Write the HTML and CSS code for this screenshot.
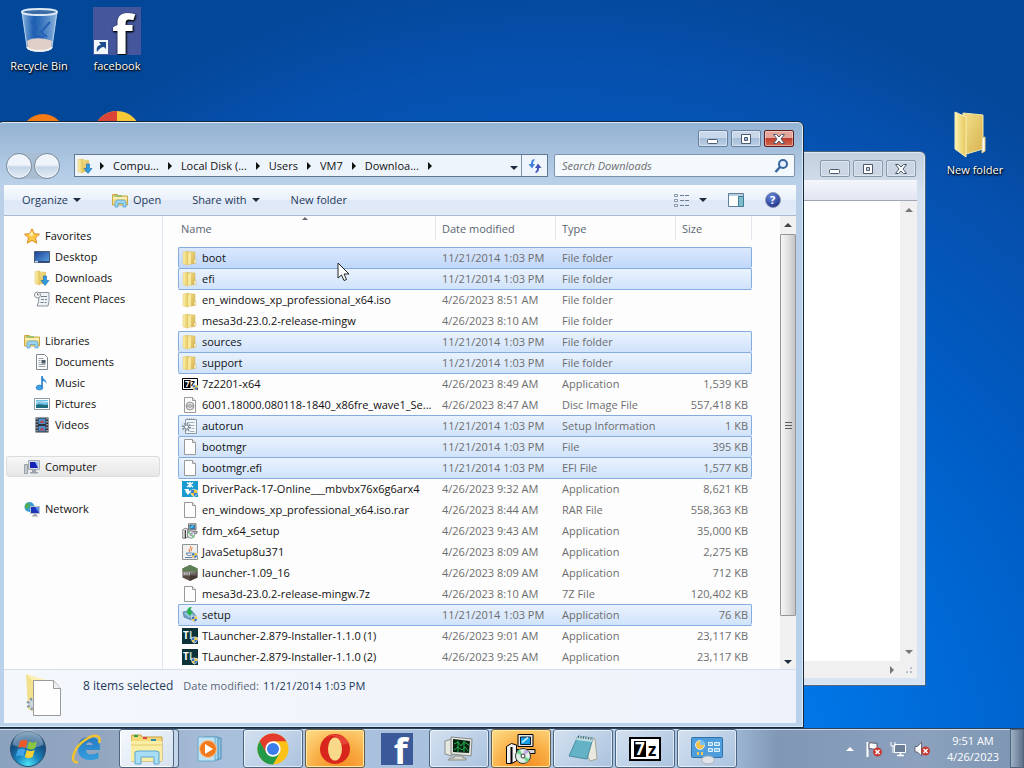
FILE: index.html
```html
<!DOCTYPE html>
<html lang="en">
<head>
    <meta charset="UTF-8">
    <meta name="viewport" content="width=device-width, initial-scale=1.0">
    <title>Downloads</title>
    <link rel="stylesheet" href="styles.css">
</head>
<body>
    <!-- shared icons -->
    <svg class="sprite" aria-hidden="true">
        <defs>
            <linearGradient id="gFolder" x1="0" x2="1"><stop offset="0" stop-color="#fdf3b0"/><stop offset="1" stop-color="#e6c65c"/></linearGradient>
            <linearGradient id="gFolderBack" x1="0" x2="1" y2="1"><stop offset="0" stop-color="#f3e08c"/><stop offset="1" stop-color="#d6b24e"/></linearGradient>
            <linearGradient id="gBlue" x1="0" y1="0" x2="1" y2="1"><stop offset="0" stop-color="#1a3f96"/><stop offset="1" stop-color="#5fa6e4"/></linearGradient>
            <linearGradient id="gGlass" x1="0" x2="1"><stop offset="0" stop-color="#bfdcf7" stop-opacity=".75"/><stop offset=".35" stop-color="#4f8fdc" stop-opacity=".35"/><stop offset="1" stop-color="#cfe6fb" stop-opacity=".7"/></linearGradient>
            <radialGradient id="gOrb" cx=".5" cy=".95" r=".95"><stop offset="0" stop-color="#4fe6f5"/><stop offset=".35" stop-color="#1a86c0"/><stop offset=".7" stop-color="#134d80"/><stop offset="1" stop-color="#5d86ad"/></radialGradient>
            <radialGradient id="gHelp" cx=".4" cy=".3" r=".8"><stop offset="0" stop-color="#6b8be0"/><stop offset="1" stop-color="#14267e"/></radialGradient>
            <linearGradient id="gIe" x1="0" y1="0" x2="0" y2="1"><stop offset="0" stop-color="#1559a8"/><stop offset="1" stop-color="#3fb0ee"/></linearGradient>
        </defs>
        <symbol id="folder" viewBox="0 0 16 16">
            <path d="M5 1.500L13 2v11.500l-8 1z" fill="url(#gFolderBack)" stroke="#d3b45a" stroke-width=".5"/>
            <path d="M1 2l5-.8V15.200l-5-1.500z" fill="url(#gFolder)" stroke="#dcc36c" stroke-width=".5"/>
            <path d="M6 3.500l3-1.500v11.500L6 15z" fill="#f6e99e"/>
            <path d="M12 9.500h2v3.500l-2 .5z" fill="#fff6cf" stroke="#c4a658" stroke-width=".4"/>
        </symbol>
        <symbol id="page" viewBox="0 0 16 16">
            <path d="M2.500.5h8l3 3v12h-11z" fill="#fdfdfd" stroke="#9a9a9a"/>
            <path d="M10.500.5v3h3" fill="#e8e8e8" stroke="#9a9a9a"/>
        </symbol>
        <symbol id="shield" viewBox="0 0 8 8">
            <path d="M4 0L0 1.200c0 3.500 1 5.600 4 6.800 3-1.200 4-3.300 4-6.800z" fill="#d8dde4"/>
            <path d="M4 .8L1 1.600V4h3z" fill="#3c74c8"/><path d="M4 .8l3 .8V4H4z" fill="#eccb3e"/>
            <path d="M1 4h3v3.200C2.300 6.500 1.300 5.500 1 4z" fill="#eccb3e"/><path d="M7 4H4v3.200C5.700 6.500 6.700 5.500 7 4z" fill="#3c74c8"/>
        </symbol>
        <symbol id="disc" viewBox="0 0 16 16">
            <use href="#page"/>
            <circle cx="8" cy="9" r="4" fill="#dcdcdc" stroke="#9a9a9a"/><circle cx="8" cy="9" r="1.300" fill="#fff" stroke="#8d8d8d"/>
            <path d="M5 7.500v3M11 7.500v3" stroke="#888"/>
        </symbol>
        <symbol id="inf" viewBox="0 0 16 16">
            <path d="M3.500 1.500h11v14h-11z" fill="#f4f8fb" stroke="#8a9aa8"/>
            <path d="M5.500 4.500h7M8.500 7.500h4M9.500 10.500h3M7.500 13.500h5" stroke="#9fb0bf"/>
            <path d="M5 1h8" stroke="#71808d" stroke-dasharray="1 1"/>
            <circle cx="4.500" cy="9" r="3.500" fill="#dfe6ec" stroke="#7a8996" stroke-width="2" stroke-dasharray="1.500 1.200"/>
            <circle cx="4.500" cy="9" r="2" fill="#fff" stroke="#6d7c8a"/>
        </symbol>
        <symbol id="driverpack" viewBox="0 0 16 16">
            <path d="M0 0h16v16H0z" fill="#199bd0"/>
            <path d="M5 1.500l6 4.500M11 1.500L5 6M8 1v5.500" stroke="#fff" stroke-width="1.500"/>
            <path d="M2 8h5v2h2l-3 4-3-4h1z" fill="#fff"/>
            <use href="#shield" x="8" y="8" width="8" height="8"/>
        </symbol>
        <symbol id="installer" viewBox="0 0 32 32">
            <path d="M13 1.500h15v12H13z" fill="#e6e6e6" stroke="#000"/>
            <path d="M15.500 4h10v7.500h-10z" fill="#159fe8" stroke="#123"/>
            <path d="M17 9.500l6-5" stroke="#aee4ff" stroke-width="2"/>
            <path d="M12 16.500h18v4H12z" fill="#d7d7d7" stroke="#000"/>
            <path d="M1.500 13.500l5-3 5 1.500v16l-5 2.500H1.500z" fill="#f3f3f3" stroke="#000"/>
            <path d="M6.500 14v16" stroke="#000" stroke-width="2"/>
            <circle cx="18" cy="23" r="7.500" fill="#dff1e6" stroke="#333"/>
            <path d="M18 23l-6.500-3 3-4zM18 23l6.500 3-3 4z" fill="#6fd28e"/><path d="M18 23l2-7 4 3z" fill="#c7a7e6"/>
            <circle cx="18" cy="23" r="2" fill="#fff" stroke="#333"/>
        </symbol>
        <symbol id="java" viewBox="0 0 16 16">
            <path d="M.5.500h15v15H.5z" fill="#f0f0ee" stroke="#8d949a"/>
            <path d="M8 2c3 2-3 3 0 6M10 3.500c1 1-2 2-.5 3.500" fill="none" stroke="#e0732c"/>
            <path d="M4.500 9h6c0 2-1 2.500-3 2.500S4.500 11 4.500 9zM3 13.500h9" fill="none" stroke="#5a7ea6"/>
            <use href="#shield" x="9" y="8" width="7" height="7"/>
        </symbol>
        <symbol id="block" viewBox="0 0 16 16">
            <path d="M8 0l7.500 3.500v9L8 16 .5 12.500v-9z" fill="#574a42"/>
            <path d="M8 0l7.500 3.500v3L8 8 .5 6.500v-3z" fill="#5e7f55"/>
            <path d="M1 6.500h14v4H1z" fill="#8d8785"/><path d="M2.500 7.500v2M5 7.500v2M7.500 7.500v2M10 7.500v2M12.500 7.500v2" stroke="#d0cccb"/>
            <path d="M8 8v8l7.500-3.500v-6z" fill="#2d2421" opacity=".45"/>
        </symbol>
        <symbol id="setup" viewBox="0 0 16 16">
            <path d="M1 5l8-2 6 7-6 3-7-3z" fill="#6f9fc4" stroke="#456e90" stroke-width=".6"/>
            <path d="M2 6l6-1.500 4 4-5 2z" fill="#9cc5df"/>
            <path d="M8 0c-2 1-3.500 3-2.500 5H4l4 4 3-4.500H9C8 3 8.500 1.500 10 .5z" fill="#25b04c"/>
            <use href="#shield" x="9" y="8" width="7" height="8"/>
        </symbol>
        <symbol id="star" viewBox="0 0 16 16">
            <path d="M8 .8l2.200 4.900 5.300.5-4 3.600 1.200 5.300L8 12.400l-4.700 2.700 1.200-5.300-4-3.600 5.300-.5z" fill="#fbc94b" stroke="#dc8a1e"/>
            <path d="M8 3l1.300 3.500L8 8 5 7z" fill="#fff0b8"/>
        </symbol>
        <symbol id="desktop" viewBox="0 0 16 16">
            <path d="M.5 2.500h15v11H.5z" fill="url(#gBlue)" stroke="#4a5a70"/>
            <path d="M1 12h14v1.500H1z" fill="#2e4a7c"/><path d="M1 12h3v1.500H1z" fill="#cfe2f5"/>
        </symbol>
        <symbol id="downloads" viewBox="0 0 16 16">
            <path d="M6 1.500L12 2v12H6z" fill="url(#gFolderBack)"/>
            <path d="M1 1.500l5-.5v14l-5-1.500z" fill="url(#gFolder)" stroke="#d8bd63" stroke-width=".5"/>
            <path d="M9.500 6h3v4.500H15l-4 5-4-5h2.500z" fill="#2f9be0" stroke="#1769ac" stroke-width=".6"/>
        </symbol>
        <symbol id="recent" viewBox="0 0 16 16">
            <path d="M5 1.500h10v9l-1 4.500H3l1.500-4z" fill="#eef2f5" stroke="#8994a0"/>
            <path d="M7 5.500h6M7 8.500h3m1 0h2M6.500 11.500h3m1 0h2" stroke="#77838f"/>
            <circle cx="3.500" cy="4" r="3" fill="#f8f8f8" stroke="#8994a0"/><path d="M3.500 2v2H5" fill="none" stroke="#555" stroke-width=".7"/>
        </symbol>
        <symbol id="library" viewBox="0 0 16 16">
            <path d="M.5 2.500h5l1 1.500h9v9H.5z" fill="#f3dc84" stroke="#caa848"/>
            <path d="M2 4h8" stroke="#5bb05b"/><path d="M1 6h14" stroke="#fff5c4" stroke-width="1.500"/>
            <path d="M3 15V9.500L5 8h7l2 1.500V15h-3v-3.500H6V15z" fill="#9bd3f0" stroke="#4a9cc8" stroke-width=".7"/>
        </symbol>
        <symbol id="documents" viewBox="0 0 16 16">
            <path d="M2.500.5h8l3 3v12h-11z" fill="#fcfcfc" stroke="#7f8790"/>
            <path d="M4.500 4.500h5M4.500 6.500h2M4.500 8.500h2M4.500 10.500h7M4.500 12.500h7" stroke="#98a3ae"/><path d="M7.500 6h4v3.500h-4z" fill="#4b5967"/>
        </symbol>
        <symbol id="music" viewBox="0 0 16 16">
            <path d="M8 1c1 3.500 5 3.500 4.500 8-.5-2-2-3-4-3v6.500z" fill="#2f8fdc"/><ellipse cx="5.500" cy="12.500" rx="3.500" ry="2.500" fill="#3b9fe6" stroke="#1c6cb4" stroke-width=".5"/><path d="M8 1v11" stroke="#1f78c4" stroke-width="1.500"/>
        </symbol>
        <symbol id="pictures" viewBox="0 0 16 16">
            <path d="M.5 2.500h15v11H.5z" fill="#fff" stroke="#8c9aa6"/>
            <path d="M2 4h12v8H2z" fill="#6fc3e8"/><path d="M2 9c4-2 8 1 12-.5V12H2z" fill="#1f6a7c"/><path d="M2 6.500c4-1.500 7 0 12-1" stroke="#e4f6fd"/>
        </symbol>
        <symbol id="videos" viewBox="0 0 16 16">
            <path d="M1.500.5h13v15h-13z" fill="#2b323b"/>
            <path d="M4.500 1.500h7v5.500h-7zM4.500 9h7v5.500h-7z" fill="#4d8fd0"/><path d="M5 6l3-3 3 3zM5 13.500l3-3 3 3z" fill="#b84a4a"/>
            <path d="M3 1v14M13 1v14" stroke="#e8eef4" stroke-dasharray="1.500 1.500"/>
        </symbol>
        <symbol id="computer" viewBox="0 0 16 16">
            <path d="M.5 5.500h3v9h-3z" fill="#c6ccd2" stroke="#7c868f" stroke-width=".7"/>
            <path d="M4.500 1.500h11v9h-11z" fill="#d9dee4" stroke="#a2abb4"/><path d="M6 3h8v6H6z" fill="#1622b4"/><path d="M11 3h3v6z" fill="#93b6f2"/>
            <path d="M8 11h4v2h2v1.500H6V13h2z" fill="#9aa3ac"/>
        </symbol>
        <symbol id="network" viewBox="0 0 16 16">
            <circle cx="5.500" cy="6" r="5" fill="#3a9ed2"/><path d="M3 2c3 0 4 2 2 4s-2 2-4 1c-.5-2 .5-4 2-5z" fill="#4fae55"/>
            <path d="M6.500 5.500h9v7h-9z" fill="#1c33bc" stroke="#b9c2cc"/><path d="M11 6h4v6z" fill="#5f8cec"/><path d="M9.500 13h3v1.500h1.500v1H8v-1h1.500z" fill="#98a2ac"/>
        </symbol>
    </svg>

    <main class="desktop">
        <a href="#" class="shortcut recycle">
            <svg viewBox="0 0 48 48" width="48" height="48">
                <path d="M7 5h35l-5 35c-1 6-24 6-25 0z" fill="url(#gGlass)" stroke="#b5d3ee"/>
                <path d="M12 34c6-4 17-3 25 0l-1 7c-2 5-22 5-23 0z" fill="#e0cfc9"/>
                <path d="M16 14l6 7-5 6M35 15l-9 10 6 5M20 29l9 1" fill="none" stroke="#265fb6" stroke-width="2"/>
                <ellipse cx="24.500" cy="5" rx="17.500" ry="3" fill="#3c6da6" stroke="#dbe9f5" stroke-width="2"/>
                <path d="M12 40c2 5 23 5 25 0" fill="none" stroke="#f2f2f2" stroke-width="2"/>
            </svg>
            <span>Recycle Bin</span>
        </a>
        <a href="#" class="shortcut facebook">
            <svg viewBox="0 0 48 48" width="48" height="48">
                <path d="M0 0h48v48H0z" fill="#45569c"/>
                <text x="19" y="47" font-size="54" font-weight="700" fill="#fff">f</text>
                <path d="M1 33h14v14H1z" fill="#f2f7fc"/><path d="M4 45c-1-5 1-7 4-7l-2-3h7v7l-2-2c-3 0-5 2-7 5z" fill="#1c4b8e"/>
            </svg>
            <span>facebook</span>
        </a>
        <a href="#" class="shortcut firefox" aria-label="Firefox"><svg viewBox="0 0 48 48" width="48" height="48"><circle cx="24" cy="24" r="22" fill="#f57c14"/></svg></a>
        <a href="#" class="shortcut chrome" aria-label="Chrome"><svg viewBox="0 0 48 48" width="48" height="48"><circle cx="24" cy="24" r="24" fill="#f5c838"/><path d="M24 0v24L3 36A24 24 0 0 1 24 0z" fill="#dc4437"/></svg></a>
        <a href="#" class="shortcut new-folder">
            <svg viewBox="0 0 48 48" width="48" height="48">
                <path d="M12 2l20 2v34l-20 6z" fill="url(#gFolderBack)" stroke="#f3e6a8"/>
                <path d="M4 1l11 5v40L4 38z" fill="url(#gFolder)" stroke="#fbf2b8"/>
                <path d="M31 27l3-1v14l-3 2z" fill="#fff" stroke="#e0c878"/>
            </svg>
            <span>New folder</span>
        </a>

        <!-- inactive window behind -->
        <section class="window back-window">
            <div class="controls">
                <button aria-label="Minimize"><svg viewBox="0 0 14 12"><rect x="1.500" y="6.500" width="10" height="4" rx="1"/></svg></button>
                <button aria-label="Maximize"><svg viewBox="0 0 14 12"><path d="M2.500 1.500h9v9h-9zM5.500 4.500h3v3h-3z" fill-rule="evenodd"/></svg></button>
                <button aria-label="Close"><svg viewBox="0 0 14 12"><path d="M1.500 1.500h3L7 4l2.500-2.500h3L9 6l3.500 4.500h-3L7 8l-2.500 2.500h-3L5 6z"/></svg></button>
            </div>
            <div class="back-body">
                <div class="back-band"></div>
                <div class="back-page"></div>
                <div class="back-vbar"><i class="tri up"></i><i class="tri down"></i></div>
                <div class="back-hbar"><i class="tri next"></i></div>
                <div class="grip"></div>
            </div>
        </section>

        <!-- explorer window -->
        <section class="window explorer">
            <div class="controls">
                <button aria-label="Minimize"><svg viewBox="0 0 14 12"><rect x="1.500" y="6.500" width="10" height="4" rx="1"/></svg></button>
                <button aria-label="Maximize"><svg viewBox="0 0 14 12"><path d="M2.500 1.500h9v9h-9zM5.500 4.500h3v3h-3z" fill-rule="evenodd"/></svg></button>
                <button class="close" aria-label="Close"><svg viewBox="0 0 14 12"><path d="M1.500 1.500h3L7 4l2.500-2.500h3L9 6l3.500 4.500h-3L7 8l-2.500 2.500h-3L5 6z"/></svg></button>
            </div>
            <div class="nav">
                <div class="travel">
                    <button aria-label="Back"></button>
                    <button aria-label="Forward"></button>
                </div>
                <div class="address">
                    <svg class="icon"><use href="#downloads"/></svg>
                    <i class="tri next"></i><button>Compu...</button>
                    <i class="tri next"></i><button>Local Disk (...</button>
                    <i class="tri next"></i><button>Users</button>
                    <i class="tri next"></i><button>VM7</button>
                    <i class="tri next"></i><button>Downloa...</button>
                    <i class="tri next"></i>
                    <button class="history" aria-label="Previous locations"><i class="tri down"></i></button>
                    <button class="refresh" aria-label="Refresh"><svg class="icon" viewBox="0 0 16 16"><path d="M7.500 1C5 1.500 4 3 4 6H1.500L5 10.500 8 6H6c0-2 .5-3 1.500-3.500z" fill="#3f82d8"/><path d="M8.500 15c2.500-.5 3.500-2 3.500-5h2.500L11 5.500 8 10h2c0 2-.5 3-1.500 3.500z" fill="#4355b8"/></svg></button>
                </div>
                <label class="search">
                    <input type="text" placeholder="Search Downloads" aria-label="Search Downloads">
                    <svg class="icon" viewBox="0 0 16 16"><circle cx="9" cy="6" r="4" fill="#e8f1fb" stroke="#36659f" stroke-width="2"/><path d="M6 9l-4.500 5" stroke="#36659f" stroke-width="2.500"/></svg>
                </label>
            </div>
            <div class="client">
                <div class="toolbar">
                    <button>Organize <i class="tri down"></i></button>
                    <button><svg class="icon"><use href="#library"/></svg> Open</button>
                    <button>Share with <i class="tri down"></i></button>
                    <button>New folder</button>
                    <button class="views" aria-label="Change your view"><svg class="icon" viewBox="0 0 16 16"><path d="M1.500 2.500h3v2h-3zM1.500 7.500h3v2h-3zM1.500 12.500h3v2h-3z" fill="#fff" stroke="#8494a8"/><path d="M7 3.500h9M7 8.500h9M7 13.500h9" stroke="#6a7b90" stroke-dasharray="4 1"/></svg><i class="tri down"></i></button>
                    <button aria-label="Show the preview pane"><svg class="icon" viewBox="0 0 16 16"><path d="M.5 1.500h15v13H.5z" fill="#fff" stroke="#5f7f9c"/><path d="M1 2h14v2H1z" fill="#b9cfe0"/><path d="M10.500 4.500h5v10h-5z" fill="#7fbccb" stroke="#3f7c96"/></svg></button>
                    <button aria-label="Help"><svg class="icon" viewBox="0 0 16 16"><circle cx="8" cy="8" r="7.500" fill="url(#gHelp)" stroke="#8e9ab6"/><text x="5" y="12" font-size="11" font-weight="700" fill="#fff">?</text></svg></button>
                </div>
                <div class="panes">
                    <nav class="sidebar">
                        <ul>
                            <li><a href="#"><svg class="icon"><use href="#star"/></svg>Favorites</a></li>
                            <li class="child"><a href="#"><svg class="icon"><use href="#desktop"/></svg>Desktop</a></li>
                            <li class="child"><a href="#"><svg class="icon"><use href="#downloads"/></svg>Downloads</a></li>
                            <li class="child"><a href="#"><svg class="icon"><use href="#recent"/></svg>Recent Places</a></li>
                        </ul>
                        <ul>
                            <li><a href="#"><svg class="icon"><use href="#library"/></svg>Libraries</a></li>
                            <li class="child"><a href="#"><svg class="icon"><use href="#documents"/></svg>Documents</a></li>
                            <li class="child"><a href="#"><svg class="icon"><use href="#music"/></svg>Music</a></li>
                            <li class="child"><a href="#"><svg class="icon"><use href="#pictures"/></svg>Pictures</a></li>
                            <li class="child"><a href="#"><svg class="icon"><use href="#videos"/></svg>Videos</a></li>
                        </ul>
                        <ul>
                            <li class="current"><a href="#"><svg class="icon"><use href="#computer"/></svg>Computer</a></li>
                        </ul>
                        <ul>
                            <li><a href="#"><svg class="icon"><use href="#network"/></svg>Network</a></li>
                        </ul>
                    </nav>
                    <div class="files">
                        <table>
                            <thead>
                                <tr><th class="name sorted">Name</th><th class="date">Date modified</th><th class="type">Type</th><th class="size">Size</th></tr>
                            </thead>
                            <tbody>
                                <tr class="selected focus"><td><svg class="icon"><use href="#folder"/></svg>boot</td><td>11/21/2014 1:03 PM</td><td>File folder</td><td></td></tr>
                                <tr class="selected"><td><svg class="icon"><use href="#folder"/></svg>efi</td><td>11/21/2014 1:03 PM</td><td>File folder</td><td></td></tr>
                                <tr><td><svg class="icon"><use href="#folder"/></svg>en_windows_xp_professional_x64.iso</td><td>4/26/2023 8:51 AM</td><td>File folder</td><td></td></tr>
                                <tr><td><svg class="icon"><use href="#folder"/></svg>mesa3d-23.0.2-release-mingw</td><td>4/26/2023 8:10 AM</td><td>File folder</td><td></td></tr>
                                <tr class="selected"><td><svg class="icon"><use href="#folder"/></svg>sources</td><td>11/21/2014 1:03 PM</td><td>File folder</td><td></td></tr>
                                <tr class="selected"><td><svg class="icon"><use href="#folder"/></svg>support</td><td>11/21/2014 1:03 PM</td><td>File folder</td><td></td></tr>
                                <tr><td><svg class="icon" viewBox="0 0 16 16"><path d="M.5 2.500h15v11H.5z" fill="#fff" stroke="#000"/><path d="M2 4h6.500v8H2z"/><text x="3" y="11" font-size="8" font-weight="700" fill="#fff">7</text><text x="9" y="10" font-size="8" font-weight="700">z</text><use href="#shield" x="10" y="8" width="6" height="7"/></svg>7z2201-x64</td><td>4/26/2023 8:49 AM</td><td>Application</td><td>1,539 KB</td></tr>
                                <tr><td><svg class="icon"><use href="#disc"/></svg>6001.18000.080118-1840_x86fre_wave1_Se...</td><td>4/26/2023 8:47 AM</td><td>Disc Image File</td><td>557,418 KB</td></tr>
                                <tr class="selected"><td><svg class="icon"><use href="#inf"/></svg>autorun</td><td>11/21/2014 1:03 PM</td><td>Setup Information</td><td>1 KB</td></tr>
                                <tr class="selected"><td><svg class="icon"><use href="#page"/></svg>bootmgr</td><td>11/21/2014 1:03 PM</td><td>File</td><td>395 KB</td></tr>
                                <tr class="selected"><td><svg class="icon"><use href="#page"/></svg>bootmgr.efi</td><td>11/21/2014 1:03 PM</td><td>EFI File</td><td>1,577 KB</td></tr>
                                <tr><td><svg class="icon"><use href="#driverpack"/></svg>DriverPack-17-Online___mbvbx76x6g6arx4</td><td>4/26/2023 9:32 AM</td><td>Application</td><td>8,621 KB</td></tr>
                                <tr><td><svg class="icon"><use href="#page"/></svg>en_windows_xp_professional_x64.iso.rar</td><td>4/26/2023 8:44 AM</td><td>RAR File</td><td>558,363 KB</td></tr>
                                <tr><td><svg class="icon"><use href="#installer"/></svg>fdm_x64_setup</td><td>4/26/2023 9:43 AM</td><td>Application</td><td>35,000 KB</td></tr>
                                <tr><td><svg class="icon"><use href="#java"/></svg>JavaSetup8u371</td><td>4/26/2023 8:09 AM</td><td>Application</td><td>2,275 KB</td></tr>
                                <tr><td><svg class="icon"><use href="#block"/></svg>launcher-1.09_16</td><td>4/26/2023 8:09 AM</td><td>Application</td><td>712 KB</td></tr>
                                <tr><td><svg class="icon"><use href="#page"/></svg>mesa3d-23.0.2-release-mingw.7z</td><td>4/26/2023 8:10 AM</td><td>7Z File</td><td>120,402 KB</td></tr>
                                <tr class="selected"><td><svg class="icon"><use href="#setup"/></svg>setup</td><td>11/21/2014 1:03 PM</td><td>Application</td><td>76 KB</td></tr>
                                <tr><td><svg class="icon" viewBox="0 0 16 16"><path d="M0 0h16v16H0z" fill="#0d3338"/><text x="1" y="11" font-size="10" font-weight="700" fill="#fff">T</text><text x="7" y="11" font-size="10" font-weight="700" fill="#b6d8d2">L</text><use href="#shield" x="9" y="8" width="7" height="8"/></svg>TLauncher-2.879-Installer-1.1.0 (1)</td><td>4/26/2023 9:01 AM</td><td>Application</td><td>23,117 KB</td></tr>
                                <tr><td><svg class="icon" viewBox="0 0 16 16"><path d="M0 0h16v16H0z" fill="#0d3338"/><text x="1" y="11" font-size="10" font-weight="700" fill="#fff">T</text><text x="7" y="11" font-size="10" font-weight="700" fill="#b6d8d2">L</text><use href="#shield" x="9" y="8" width="7" height="8"/></svg>TLauncher-2.879-Installer-1.1.0 (2)</td><td>4/26/2023 9:25 AM</td><td>Application</td><td>23,117 KB</td></tr>
                            </tbody>
                        </table>
                    </div>
                    <div class="scrollbar">
                        <i class="tri up"></i>
                        <div class="track"><div class="thumb"></div></div>
                        <i class="tri down"></i>
                    </div>
                </div>
                <div class="details">
                    <svg viewBox="0 0 40 48" width="40" height="48">
                        <path d="M2 1l14 6v34L4 36z" fill="#f3e08c"/><path d="M2 1l20 6H8z" fill="#fbf0b4"/>
                        <circle cx="9" cy="31" r="5" fill="#ccd6df" stroke="#8899a8" stroke-width="3" stroke-dasharray="2 2"/>
                        <path d="M9.500 7.500h20l7 8v27h-27z" fill="#fefefe" stroke="#9a9a9a"/><path d="M29.500 7.500v8h7" fill="#eee" stroke="#9a9a9a"/>
                    </svg>
                    <strong>8 items selected</strong>
                    <span>Date modified:</span>
                    <b>11/21/2014 1:03 PM</b>
                </div>
            </div>
        </section>

        <svg class="cursor" viewBox="0 0 14 20" width="14" height="20"><path d="M1 1v15l3.500-3 2.500 5.500 2.500-1L7 12h5z" fill="#fff" stroke="#222"/></svg>
    </main>

    <footer class="taskbar">
        <button class="start" aria-label="Start">
            <svg viewBox="0 0 38 38" width="38" height="38">
                <circle cx="19" cy="19" r="17.500" fill="url(#gOrb)" stroke="#2a4a6c"/>
                <path d="M4 15a15 15 0 0 1 30 0c-9 4-21 4-30 0z" fill="#fff" opacity=".3"/>
                <path d="M11 11c3-1.500 5-1.500 7.500 0l-1.800 7c-2.500-1.500-4.700-1.500-7.500 0z" fill="#ec5a2a"/>
                <path d="M20 11.500c2.500 1.500 5 1.500 8 0l-2 7c-3 1.500-5.300 1.500-7.800 0z" fill="#8cc63f"/>
                <path d="M8.700 19.500c2.800-1.500 5-1.500 7.500 0l-1.800 7c-2.500-1.500-4.700-1.500-7.500 0z" fill="#3fa4e8"/>
                <path d="M17.700 20c2.500 1.500 5 1.500 8 0l-2 7c-3 1.500-5.300 1.500-7.800 0z" fill="#fbd034"/>
            </svg>
        </button>
        <button class="task" aria-label="Internet Explorer">
            <svg viewBox="0 0 32 32" width="32" height="32">
                <text x="5" y="27" font-size="41" font-weight="800" fill="url(#gIe)">e</text>
                <path d="M7 29C-2 31 2 15 14 7c9-6 17-6 14 3" fill="none" stroke="#f2c32f" stroke-width="2.500"/>
            </svg>
        </button>
        <button class="task active stacked" aria-label="Windows Explorer">
            <svg viewBox="0 0 32 32" width="32" height="32">
                <path d="M0 4l1-2h9l1 2h20v24H0z" fill="#f4d777" stroke="#c99f3e"/>
                <path d="M0 8h31v20H0z" fill="#faeda4"/><path d="M0 12h31" stroke="#e3c86d"/>
                <path d="M3 3h4" stroke="#2ca14a" stroke-width="2"/><path d="M12 5h4" stroke="#d44" stroke-width="2"/><path d="M20 7h5" stroke="#2d8fb0" stroke-width="2"/>
                <path d="M4 31V19l3-1h18l3 1v12h-5v-7H10v7z" fill="#a9dcf5" stroke="#5aa7d2"/>
            </svg>
        </button>
        <button class="task" aria-label="Windows Media Player">
            <svg viewBox="0 0 32 32" width="32" height="32">
                <path d="M12 5h14v21H12z" fill="#8cc4e4" stroke="#4f8fb8"/><path d="M9 4h14v23H9z" fill="#abdaf0" stroke="#4f8fb8"/><path d="M3 4h17v24H3z" fill="#bfe3f5" stroke="#6daacb"/>
                <circle cx="13" cy="16" r="8.500" fill="#f07a1d" stroke="#fbc391"/><path d="M10 11l8 5-8 5z" fill="#fff"/>
            </svg>
        </button>
        <button class="task open" aria-label="Google Chrome">
            <svg viewBox="0 0 32 32" width="32" height="32">
                <circle cx="16" cy="16" r="15.500" fill="#fbc116"/>
                <path d="M2.600 8.200A15.500 15.500 0 0 1 29.400 8.200H16L9 20z" fill="#e33b2e"/>
                <path d="M2.600 8.200A15.500 15.500 0 0 0 16 31.500L22.700 20H9.300z" fill="#229a48"/>
                <circle cx="16" cy="16" r="7.700" fill="#fff"/><circle cx="16" cy="16" r="6" fill="#3b7ded"/>
            </svg>
        </button>
        <button class="task alert" aria-label="Opera">
            <svg viewBox="0 0 32 32" width="32" height="32"><ellipse cx="16" cy="16" rx="15" ry="15" fill="#d8261c"/><ellipse cx="16" cy="16" rx="7" ry="11.500" fill="#fbd98a"/><path d="M7 5C13-1 26 2 30 10l-7 2C21 3 13 1 7 5z" fill="#f25a47" opacity=".6"/></svg>
        </button>
        <button class="task" aria-label="Facebook"><svg viewBox="0 0 48 48" width="32" height="32"><path d="M0 0h48v48H0z" fill="#3b5998"/><text x="19" y="47" font-size="54" font-weight="700" fill="#fff">f</text></svg></button>
        <button class="task open" aria-label="Task Manager">
            <svg viewBox="0 0 32 32" width="32" height="32">
                <path d="M2 8l7-2v17l-7-2z" fill="#e7e7e2" stroke="#8d8d86"/>
                <path d="M8 4l21 2-1 17-20-2z" fill="#e4e5e0" stroke="#868983"/><path d="M10 6l17 2-1 12-16-1z" fill="#092313"/>
                <path d="M11 11l4-2 3 4 3-4 5 3M11 17l4-3 4 3 3-3 3 4M15 8v11M21 8v11" fill="none" stroke="#25b14e"/>
                <path d="M11 23h9v2h3v2H5l2-2h4z" fill="#d5d6cf" stroke="#8d8d86"/>
            </svg>
        </button>
        <button class="task alert" aria-label="Setup"><svg viewBox="0 0 32 32" width="32" height="32"><use href="#installer"/></svg></button>
        <button class="task open" aria-label="Notepad">
            <svg viewBox="0 0 32 32" width="32" height="32"><path d="M12 4l16 2 2 20-7 2z" fill="#e9e9df" stroke="#a6a89c"/><path d="M11 3l15 2-6 21L2 23z" fill="#63b2c6" stroke="#4d8c9f"/><path d="M11 3l15 2-1 4L9 7z" fill="#b9dde4"/><path d="M11 4l15 2" stroke="#555" stroke-width="2" stroke-dasharray="1 1.500"/></svg>
        </button>
        <button class="task open" aria-label="7-Zip">
            <svg viewBox="0 0 32 32" width="32" height="32"><path d="M1 5h30v22H1z" fill="#fff" stroke="#000" stroke-width="2"/><path d="M5 8h12v16H5z"/><text x="6" y="22" font-size="17" font-weight="700" fill="#fff">7</text><text x="19" y="23" font-size="17" font-weight="700">z</text></svg>
        </button>
        <button class="task open" aria-label="Control Panel">
            <svg viewBox="0 0 32 32" width="32" height="32"><rect x=".5" y="4.500" width="31" height="20" rx="1" fill="#4f9edb" stroke="#2e72ac"/><circle cx="9" cy="12" r="4.500" fill="#f6c04b" stroke="#d7ecfb"/><path d="M9 12V7a5 5 0 0 1 5 5z" fill="#79c3f0"/><path d="M17.500 9.500h4v3h-4zM23.500 9.500h5v3h-5zM17.500 15.500h4v3h-4zM23.500 15.500h5v3h-5z" fill="#7cc0ef" stroke="#e3f2fc"/><path d="M7 19v3M11 19v3" stroke="#f4c95a" stroke-width="2"/><ellipse cx="17" cy="27" rx="6.500" ry="4" fill="#e0e4e8" stroke="#a7b0b8"/></svg>
        </button>
        <div class="tray">
            <button aria-label="Show hidden icons"><i class="tri up"></i></button>
            <button aria-label="Action Center"><svg class="icon" viewBox="0 0 16 16"><path d="M1.500 1v15" stroke="#fff" stroke-width="2"/><path d="M3 2c3-1 4 1 8 0v6c-4 1-5-1-8 0z" fill="#fff" stroke="#556"/><circle cx="11.500" cy="11" r="4.500" fill="#c83b34"/><path d="M9.500 9l4 4M13.500 9l-4 4" stroke="#fff" stroke-width="1.500"/></svg></button>
            <button aria-label="Network"><svg class="icon" viewBox="0 0 16 16"><path d="M4.500 3.500h11v8h-11z" fill="#6d7f96" stroke="#fff"/><path d="M7 14.500h7M10.500 12v2" stroke="#fff" stroke-width="1.500"/><path d="M1 1v4h4V1M3 5v7" fill="none" stroke="#fff"/></svg></button>
            <button aria-label="Volume"><svg class="icon" viewBox="0 0 16 16"><path d="M1 5.500h2.500L7.500 1v14l-4-4H1z" fill="#fff" stroke="#667"/><circle cx="11.500" cy="10" r="4.500" fill="#c83b34"/><path d="M9.500 8l4 4M13.500 8l-4 4" stroke="#fff" stroke-width="1.500"/></svg></button>
            <button class="clock"><time>9:51 AM</time><time>4/26/2023</time></button>
        </div>
        <button class="show-desktop" aria-label="Show desktop"></button>
    </footer>
</body>
</html>
```

FILE: styles.css
```css
* {
    box-sizing: border-box;
}
body {
    font-family: 'Open Sans', 'Noto Sans', sans-serif;
    font-size: 11px;
    line-height: 16px;
    margin: 0;
    height: 100vh;
    overflow: hidden;
    color: #111;
    display: flex;
    flex-direction: column;
    background: radial-gradient(ellipse 80% 110% at 55% 105%, #0086f4 0%, #0074e4 35%, #005cc4 68%, #0650ae 88%, #034798 100%);
}
button {
    font: inherit;
    color: inherit;
    padding: 0;
    border: none;
    background: none;
    white-space: nowrap;
}
a {
    color: inherit;
    text-decoration: none;
}
ul {
    list-style: none;
    margin: 0;
    padding: 0;
}
.sprite {
    position: absolute;
    width: 0;
    height: 0;
}
.icon {
    width: 16px;
    height: 16px;
    flex: none;
}
.desktop {
    position: relative;
    flex: 1;
    min-height: 0;
}

/* small triangles */
.tri {
    display: inline-block;
    border: 4px solid transparent;
    flex: none;
}
.tri.next {
    border-left-color: #111;
    border-right: none;
}
.tri.down {
    border-top-color: #1e2c40;
    border-bottom: none;
}
.tri.up {
    border-bottom-color: #444;
    border-top: none;
}

/* desktop icons */
.shortcut {
    position: absolute;
    width: 76px;
    display: flex;
    flex-direction: column;
    align-items: center;
    gap: 3px;
    color: #fff;
    text-shadow: 0 1px 2px #000, 1px 1px 2px #000;
}
.recycle {
    left: 1px;
    top: 7px;
}
.facebook {
    left: 79px;
    top: 7px;
}
.firefox {
    left: 5px;
    top: 112px;
}
.chrome {
    left: 79px;
    top: 111px;
}
.new-folder {
    right: 11px;
    top: 111px;
}

/* windows */
.window {
    position: absolute;
    display: flex;
    flex-direction: column;
    border: 1px solid #17283c;
    border-radius: 6px 6px 0 0;
    background: linear-gradient(#94b2d2, #bad0e9 60px, #b9d1ea);
    box-shadow: inset 0 0 0 1px #dcebf8;
}
.controls {
    display: flex;
    justify-content: flex-end;
    gap: 3px;
    padding: 8px 9px 0;
}
.controls button {
    width: 30px;
    height: 17px;
    display: flex;
    align-items: center;
    justify-content: center;
    border: 1px solid #66809f;
    border-radius: 2px;
    background: linear-gradient(#c8d8ea 45%, #a5bdd8 50%, #bdd1e7);
    box-shadow: inset 0 0 0 1px rgba(255, 255, 255, 0.4);
}
.controls svg {
    width: 14px;
    height: 12px;
    fill: #fff;
    stroke: #4b5a6e;
}
.controls .close {
    border-color: #5c1c1c;
    background: linear-gradient(#e2a69a 45%, #bf4030 50%, #d0684f);
}
.back-window {
    left: 30%;
    right: 98px;
    top: 151px;
    bottom: 42px;
    border-color: #4f6479;
    background: linear-gradient(#c4cfdd, #d5e1ef 40px, #d8e4f1);
}
.back-window .controls button {
    border-color: #8797ac;
    background: #cbd6e4;
}
.back-body {
    flex: 1;
    min-height: 0;
    margin: 3px 8px 7px;
    display: grid;
    grid-template: 21px 1fr 17px / 1fr 17px;
    background: #f0f0f0;
}
.back-band {
    grid-column: 1 / 3;
    border-bottom: 1px solid #a0a6b4;
    background: linear-gradient(#f4f6fb, #e2e4f3);
}
.back-page {
    background: #fff;
}
.back-vbar {
    display: flex;
    flex-direction: column;
    align-items: center;
    justify-content: space-between;
    padding: 7px 0;
}
.back-hbar {
    display: flex;
    align-items: center;
    justify-content: flex-end;
    padding-right: 6px;
}
.back-window .tri.up {
    border-bottom-color: #777;
}
.back-window .tri.down {
    border-top-color: #777;
}
.back-window .tri.next {
    border-left-color: #777;
}
.grip {
    margin: 5px;
    background: radial-gradient(circle, #b4bcc8 1px, transparent 1px) 0 0 / 4px 4px;
    clip-path: polygon(100% 0, 100% 100%, 0 100%);
}
.explorer {
    left: -3px;
    right: 220px;
    top: 121px;
    bottom: 0;
}
.nav {
    display: flex;
    align-items: center;
    gap: 6px;
    height: 37px;
    padding: 0 8px;
}
.travel {
    display: flex;
    gap: 2px;
    margin-right: 6px;
    border-radius: 14px;
    background: #a9bdd3;
}
.travel button {
    width: 26px;
    height: 26px;
    border: 1px solid #7b8b9d;
    border-radius: 50%;
    background: linear-gradient(#eef4fa 45%, #c6d5e6 55%, #e4eef8);
    box-shadow: inset 0 0 0 1px #f0f6fb;
}
.address {
    flex: 1;
    display: flex;
    align-items: center;
    gap: 9px;
    height: 23px;
    margin-left: 2px;
    padding-left: 2px;
    border: 1px solid #5f7894;
    background: #eef4fb;
}
.address > .icon {
    margin-right: -2px;
}
.history {
    margin-left: auto;
    width: 14px;
}
.refresh {
    width: 26px;
    height: 21px;
    display: flex;
    align-items: center;
    justify-content: center;
    margin-left: -9px;
    border-left: 1px solid #7c93ad;
}
.search {
    flex: none;
    width: 30%;
    min-width: 241px;
    height: 23px;
    display: flex;
    align-items: center;
    padding: 0 4px 0 7px;
    border: 1px solid #7c93ad;
    border-radius: 2px;
    background: #f4f9fd;
}
.search input {
    flex: 1;
    min-width: 0;
    padding: 0;
    border: none;
    background: none;
    font: inherit;
    font-style: italic;
}
.search input::placeholder {
    color: #6d6d6d;
    opacity: 1;
}
.client {
    flex: 1;
    min-height: 0;
    display: flex;
    flex-direction: column;
    margin: 1px 7px 4px 6px;
    background: #fdfdfd;
}
.toolbar {
    display: flex;
    align-items: center;
    gap: 31px;
    height: 31px;
    padding: 0 15px 0 18px;
    color: #1e395b;
    border-bottom: 1px solid #a9bbd0;
    background: linear-gradient(#fafcff, #e9f0fa 50%, #dfe8f6 52%, #e2ebf8);
}
.toolbar button {
    display: flex;
    align-items: center;
    gap: 5px;
}
.toolbar .views {
    margin-left: auto;
    gap: 10px;
}
.toolbar .views ~ button {
    margin-left: -10px;
}
.panes {
    flex: 1;
    min-height: 0;
    display: flex;
}
.sidebar {
    flex: none;
    width: 159px;
    padding: 9px 2px 0;
    border-right: 1px solid #dde7f2;
}
.sidebar ul + ul {
    margin-top: 21px;
}
.sidebar li {
    height: 21px;
    border: 1px solid transparent;
    border-radius: 3px;
}
.sidebar a {
    display: flex;
    align-items: center;
    gap: 5px;
    height: 19px;
    padding-left: 17px;
}
.sidebar .child a {
    padding-left: 27px;
}
.sidebar .current {
    border-color: #dcdcdc;
    background: linear-gradient(#f8f8f8, #e6e6e6);
}

/* file list */
.files {
    flex: 1;
    min-width: 0;
    overflow: hidden;
    padding-left: 15px;
}
table {
    table-layout: fixed;
    width: calc(100% - 28px);
    border-collapse: separate;
    border-spacing: 0;
}
th {
    height: 31px;
    padding: 0 6px 6px;
    text-align: left;
    font-weight: 400;
    color: #5a6672;
    background: linear-gradient(#e3e8ee, #e3e8ee) no-repeat right top / 1px 24px;
}
th.name {
    padding-left: 3px;
}
.date, .type {
    width: 120px;
}
.size {
    width: 76px;
}
.sorted {
    position: relative;
}
.sorted::after {
    content: '';
    position: absolute;
    left: 48%;
    top: 1px;
    border: 3px solid transparent;
    border-top: none;
    border-bottom-color: #667;
}
td {
    height: 21px;
    padding: 0 0 0 6px;
    border-top: 1px solid transparent;
    color: #6d6d6d;
    white-space: nowrap;
}
td:first-child {
    padding-left: 3px;
    border-left: 1px solid transparent;
    color: #111;
}
td .icon {
    margin-right: 4px;
    vertical-align: top;
}
td:last-child {
    padding: 0 3px 0 0;
    border-right: 1px solid transparent;
    text-align: right;
}
.selected td {
    border-color: #84acdd;
    background: linear-gradient(#e9f2fe, #d0e3fb);
}
.focus td {
    background: linear-gradient(#dbe8fd, #c0d7fa);
}
.selected + tr td {
    border-top-color: #84acdd;
}
.selected td:first-child {
    border-radius: 2px 0 0 2px;
}
.selected td:last-child {
    border-radius: 0 2px 2px 0;
}
.scrollbar {
    flex: none;
    width: 16px;
    display: flex;
    flex-direction: column;
    align-items: center;
    padding: 7px 0 5px;
    background: #f1f1f1;
}
.track {
    flex: 1;
    align-self: stretch;
    padding: 7px 0 44px;
}
.thumb {
    height: 100%;
    border: 1px solid #979797;
    border-radius: 1px;
    background: repeating-linear-gradient(#5c5c5c 0 1px, transparent 1px 3px) no-repeat center / 7px 7px, linear-gradient(90deg, #f5f5f5, #e2e2e2 50%, #c4c4c8);
}
.details {
    height: 54px;
    display: flex;
    align-items: flex-start;
    gap: 4px;
    padding: 3px 20px;
    border-top: 1px solid #d3deea;
    color: #1e395b;
    background: linear-gradient(90deg, #f4f7fc, #eef3fb);
}
.details strong, .details span, .details b {
    margin-top: 5px;
    font-weight: 400;
}
.details strong {
    margin-left: 15px;
    margin-right: 6px;
    font-size: 12px;
}
.details span {
    color: #5a6779;
}
.cursor {
    position: absolute;
    left: 337px;
    top: 262px;
}

/* taskbar */
.taskbar {
    flex: none;
    height: 40px;
    display: flex;
    align-items: stretch;
    gap: 2px;
    border-top: 1px solid #2f4257;
    background: linear-gradient(90deg, #8ba2be, #93a6c0 10%, #a9c0dc 22%, #a9c3e0 70%, #8097b5 76%, #8ba1be 90%, #7e96b3);
    box-shadow: inset 0 1px 0 #c9dbed;
}
.start {
    width: 55px;
}
.task {
    width: 60px;
    border: 1px solid transparent;
    border-radius: 3px;
}
.start, .task {
    display: flex;
    align-items: center;
    justify-content: center;
}
.open {
    border-color: #4c6580;
    background: linear-gradient(135deg, #d3e1f0, #abc3df);
    box-shadow: inset 0 0 0 1px rgba(255, 255, 255, 0.6);
}
.active {
    border-color: #4c6580;
    background: linear-gradient(135deg, #f4f8fc, #d3e0ef);
    box-shadow: inset 0 0 0 1px #fff;
}
.stacked {
    padding-right: 5px;
    box-shadow: inset -4px 0 0 #c5d6e8, inset -5px 0 0 #4c6580, inset 0 0 0 1px #fff;
}
.alert {
    border-color: #6b5b45;
    background: radial-gradient(circle at 60% 110%, #f48a1f, #f9ad45 50%, #fde08a);
    box-shadow: inset 0 0 0 1px #fdeaa8;
}
.tray {
    margin-left: auto;
    display: flex;
    align-items: center;
    gap: 8px;
    color: #fff;
}
.tray button {
    display: flex;
}
.tray .tri.up {
    border-bottom-color: #fff;
}
.tray button:first-child {
    margin-right: 4px;
}
.tray .clock {
    display: block;
    width: 70px;
    text-align: center;
}
.clock time {
    display: block;
}
.show-desktop {
    width: 14px;
    border: 1px solid #50657e;
    background: linear-gradient(90deg, #9fb1c6, #5e7189);
}
```
